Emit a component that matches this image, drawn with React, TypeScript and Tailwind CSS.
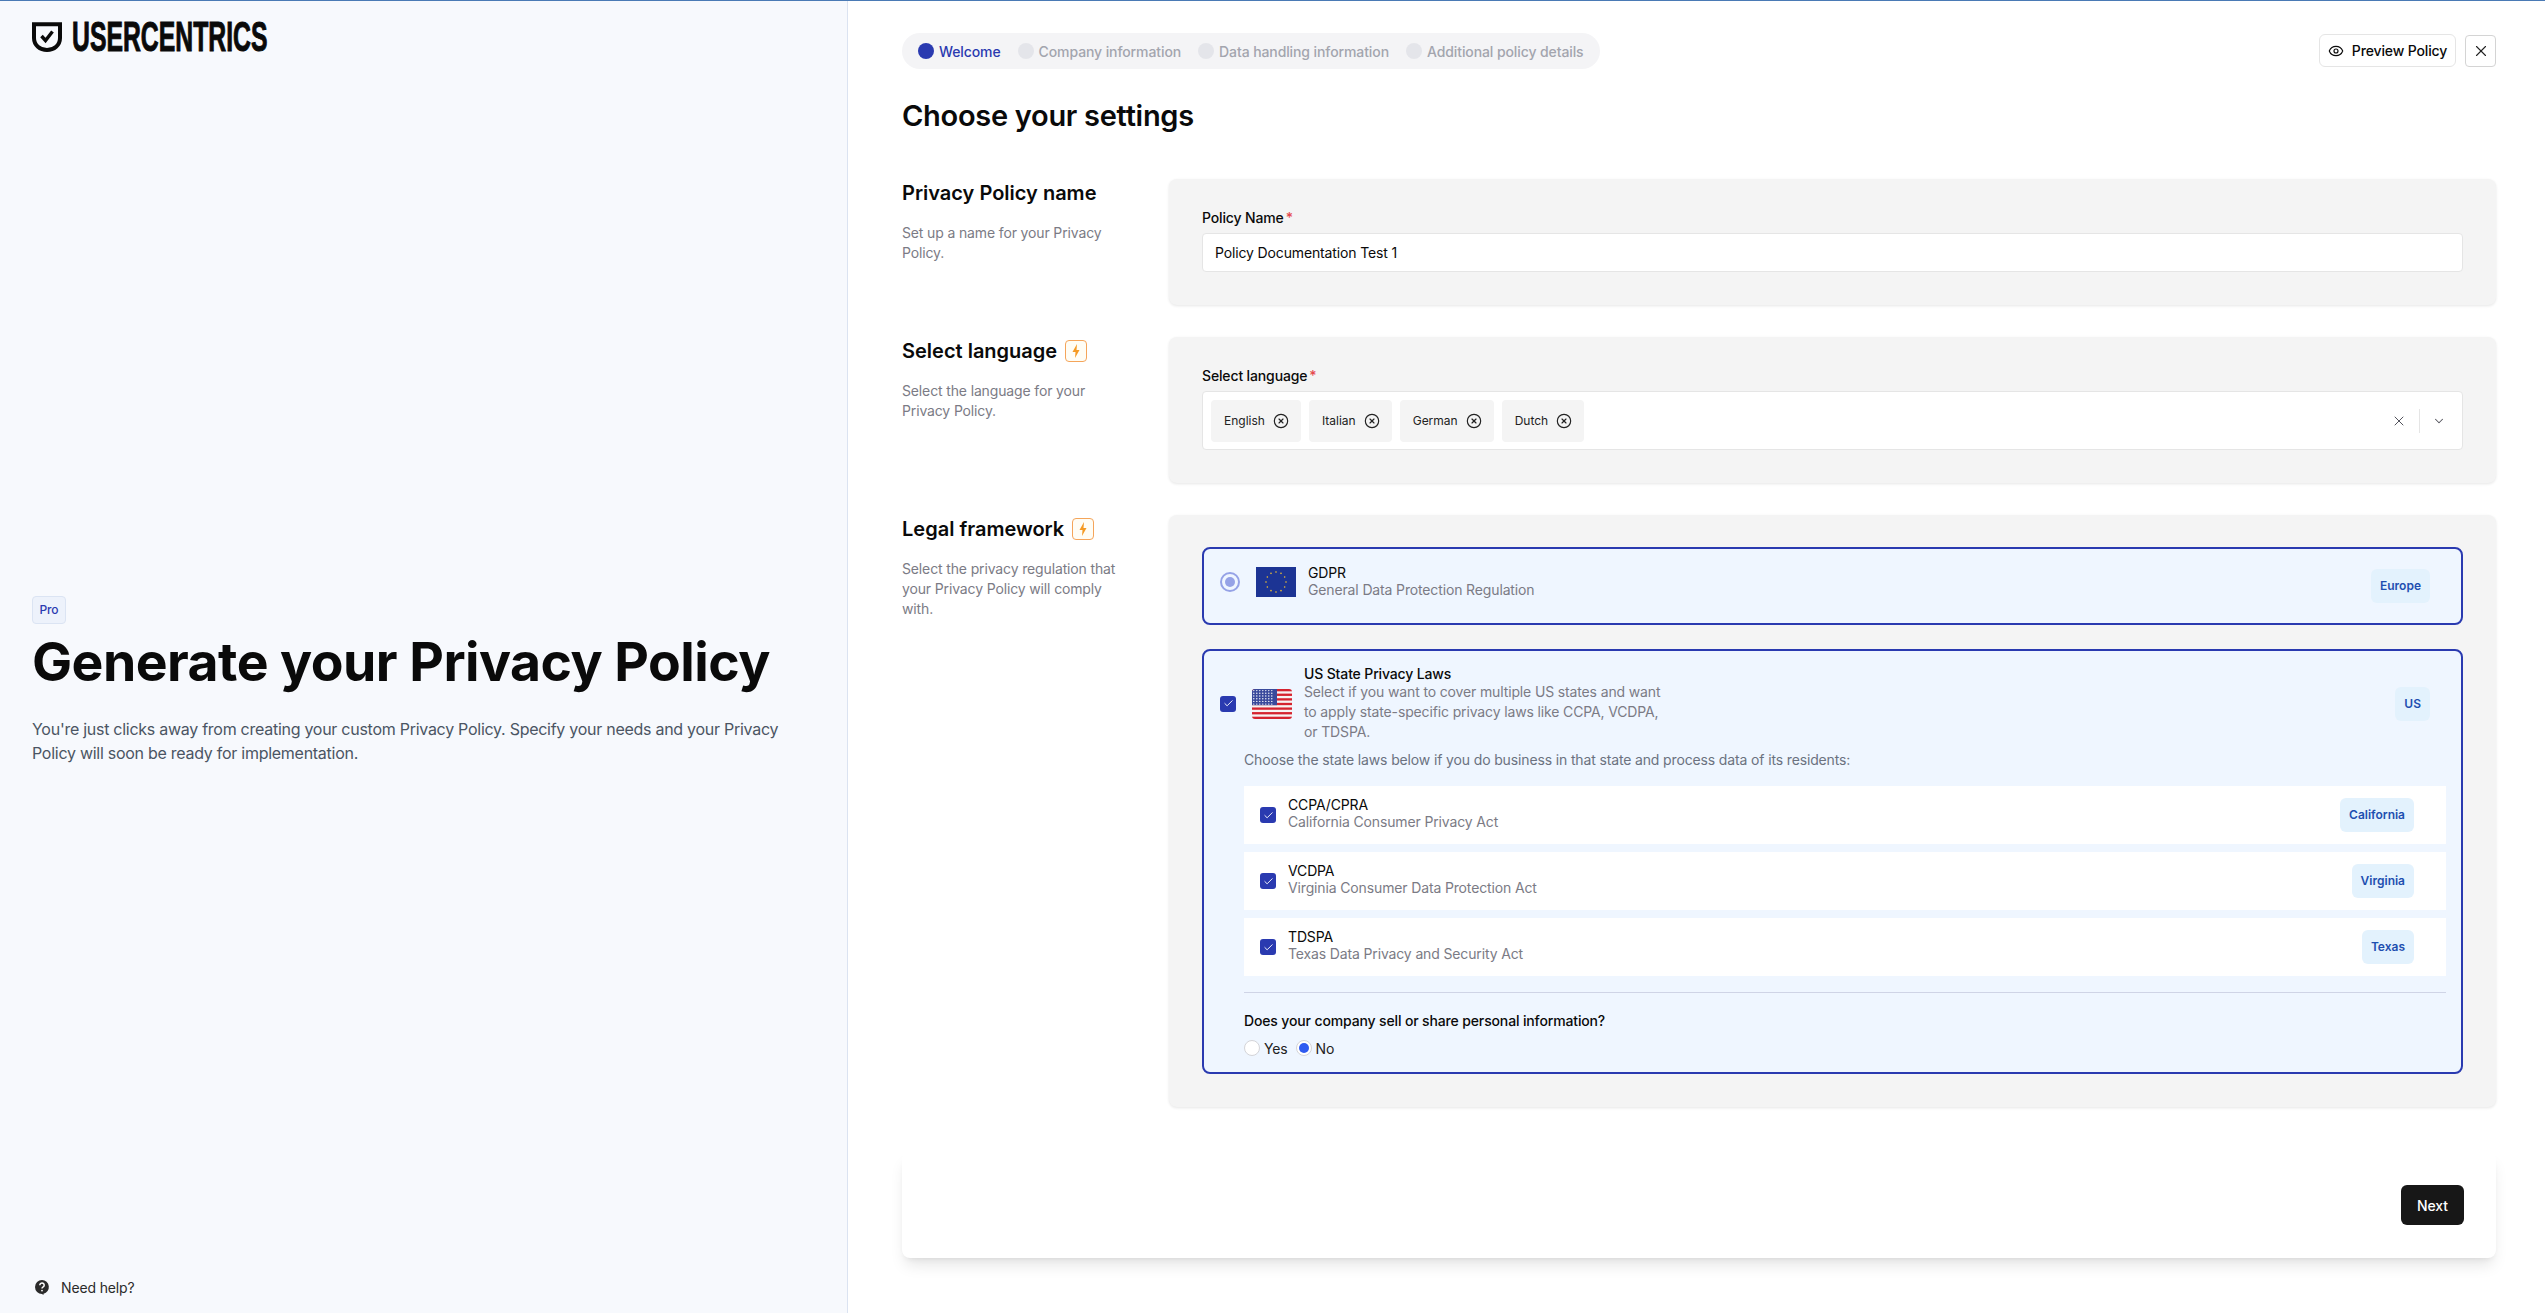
import { CircleX, Check, ChevronDown, Eye, X } from "lucide-react";

const Bolt = () => (
  <span className="ml-[8px] inline-flex h-[22px] w-[22px] items-center justify-center rounded-[4px] border border-[#f5a55a] bg-[#fffdf5]">
    <svg width="8" height="14" viewBox="0 0 8 14"><path d="M5 0 L0.5 8 H3.5 L3 14 L7.5 6 H4.5 Z" fill="#f59a23" /></svg>
  </span>
);

const Box = () => (
  <span className="flex h-[16px] w-[16px] shrink-0 items-center justify-center rounded-[3px] bg-[#2a3ab0]">
    <Check size={11} color="#ffffff" strokeWidth={2} />
  </span>
);

const Tag = ({ children }: { children: string }) => (
  <span className="flex h-[34px] shrink-0 items-center rounded-[6px] bg-[#e3f2fd] px-[9px] text-[12px] font-semibold tracking-normal text-[#1e4fb0]">{children}</span>
);

const EuFlag = () => {
  const stars = Array.from({ length: 12 }, (_, i) => {
    const a = (i * Math.PI) / 6;
    return <circle key={i} cx={20 + 10 * Math.cos(a)} cy={15 + 10 * Math.sin(a)} r="0.8" fill="#f2c230" />;
  });
  return (
    <svg width="40" height="30" viewBox="0 0 40 30" className="shrink-0">
      <rect width="40" height="30" fill="#1c3494" />
      {stars}
    </svg>
  );
};

const UsFlag = () => {
  const stripes = Array.from({ length: 7 }, (_, i) => <rect key={i} y={(i * 30 * 2) / 13} width="40" height={30 / 13} fill="#d5232f" />);
  const dots = [];
  for (let r = 0; r < 6; r++) for (let c = 0; c < 7; c++) dots.push(<circle key={r + "-" + c} cx={1.8 + c * 3} cy={1.6 + r * 2.7} r="0.7" fill="#ffffff" />);
  return (
    <svg width="40" height="30" viewBox="0 0 40 30" className="shrink-0 rounded-[3px]">
      <rect width="40" height="30" fill="#f6f3f3" />
      {stripes}
      <rect width="25" height="16.2" fill="#3a4a9c" />
      {dots}
    </svg>
  );
};

const Logo = () => (
  <div className="flex h-[32px] items-center gap-[10px]">
    <svg width="30" height="30" viewBox="0 0 30 30" className="shrink-0">
      <path d="M2 2.2 H28 V16 C28 23.2 22 28 15 28 C8 28 2 23.2 2 16 Z" fill="none" stroke="#0a0a0a" strokeWidth="4" />
      <path d="M9.5 14 L13.5 18.5 L20.5 9.5" fill="none" stroke="#0a0a0a" strokeWidth="3.4" />
    </svg>
    <div className="h-[32px] w-[195px]">
      <span className="inline-block origin-left scale-x-[0.59] whitespace-nowrap [font-family:'Liberation_Sans',sans-serif] text-[42px] font-bold leading-[32px] tracking-normal text-[#0a0a0a] [-webkit-text-stroke:1px_#0a0a0a]">USERCENTRICS</span>
    </div>
  </div>
);

const Help = () => (
  <svg width="16" height="16" viewBox="0 0 16 16" className="shrink-0">
    <path d="M8 1a7 7 0 1 0 0 14 l1.5 1 v-1.2 A7 7 0 0 0 8 1z" fill="#2b2b2b" />
    <path d="M5.8 6.2 a2.2 2.1 0 1 1 3.4 1.7 c-.8.5-1.2.9-1.2 1.7" fill="none" stroke="#fff" strokeWidth="1.5" />
    <circle cx="8" cy="11.6" r="0.9" fill="#fff" />
  </svg>
);

const Step = ({ label, on }: { label: string; on?: boolean }) => (
  <div className="flex items-center gap-[5px]">
    <span className={on ? "h-[16px] w-[16px] rounded-full bg-[#2a3ab0]" : "h-[16px] w-[16px] rounded-full bg-[#e4e5ea]"} />
    <span className={on ? "text-[14px] font-medium tracking-[-0.1px] text-[#2a3ab0]" : "text-[14px] font-medium tracking-[-0.1px] text-[#a3a5ae]"}>{label}</span>
  </div>
);

const Section = ({ title, desc, bolt, children }: { title: string; desc: string; bolt?: boolean; children: React.ReactNode }) => (
  <section className="grid grid-cols-[267px_1fr]">
    <div>
      <div className="mt-[3px] flex h-[22px] items-center text-[20px] font-semibold leading-[22px] tracking-normal text-[#0a0a0a]">
        {title}
        {bolt && <Bolt />}
      </div>
      <p className="mt-[19px] w-[225px] text-[14px] leading-[20px] text-[#7b7b85]">{desc}</p>
    </div>
    {children}
  </section>
);

const Chip = ({ label }: { label: string }) => (
  <span className="flex h-[42px] items-center gap-[8px] rounded-[4px] bg-[#f4f4f4] pl-[13px] pr-[12px] text-[12px] tracking-normal text-[#222222]">
    {label}
    <CircleX size={16} strokeWidth={1.75} color="#222222" />
  </span>
);

const Law = ({ name, full, tag }: { name: string; full: string; tag: string }) => (
  <div className="flex h-[58px] items-center bg-white pl-[16px] pr-[32px]">
    <Box />
    <div className="ml-[12px] flex-1 pb-[5px] text-[14px] leading-[17px]">
      <div className="text-[#0a0a0a]">{name}</div>
      <div className="text-[#7b7b85]">{full}</div>
    </div>
    <Tag>{tag}</Tag>
  </div>
);

export default function App() {
  return (
    <div className="flex h-screen w-full overflow-hidden border-t border-[#4a7ab5] bg-white [font-family:Inter,sans-serif] tracking-[-0.14px]">
      <aside className="flex w-[848px] shrink-0 flex-col border-r border-[#dbe3f1] bg-[#f7f9fd] pl-[32px]">
        <div className="mt-[20px]">
          <Logo />
        </div>
        <div className="mt-[543px]">
          <span className="inline-flex h-[28px] w-[34px] items-center justify-center rounded-[4px] border border-[#dbe4f3] bg-[#edf2fb] text-[12px] font-medium text-[#2a3ab0]">Pro</span>
          <h1 className="mt-[6px] text-[53.5px] font-bold leading-[64px] tracking-[-0.01em] text-[#0a0a0a]">Generate your Privacy Policy</h1>
          <p className="mt-[23px] w-[780px] text-[16px] leading-[24px] tracking-[-0.27px] text-[#4b5563]">You're just clicks away from creating your custom Privacy Policy. Specify your needs and your Privacy Policy will soon be ready for implementation.</p>
        </div>
        <div className="mt-auto mb-[16px] flex h-[20px] items-center gap-[11px] pl-[2px] text-[14px] text-[#2b2b2b]">
          <Help />
          Need help?
        </div>
      </aside>

      <main className="flex min-w-0 flex-1 flex-col pl-[54px] pr-[49px] pt-[32px]">
        <div className="flex items-start justify-between">
          <div className="flex h-[36px] items-center gap-[17px] rounded-full bg-[#f4f4f6] pl-[16px] pr-[16px]">
            <Step label="Welcome" on />
            <Step label="Company information" />
            <Step label="Data handling information" />
            <Step label="Additional policy details" />
          </div>
          <div className="mt-[1px] flex items-center gap-[9px]">
            <button className="flex h-[33px] w-[137px] items-center justify-center gap-[8px] rounded-[6px] border border-[#e5e5e5] bg-white text-[14px] font-medium text-[#0a0a0a]">
              <Eye size={16} strokeWidth={1.75} />
              Preview Policy
            </button>
            <button className="flex h-[32px] w-[31px] items-center justify-center rounded-[4px] border border-[#d4d4d4] bg-white">
              <X size={18} strokeWidth={1.5} color="#222222" />
            </button>
          </div>
        </div>

        <h2 className="mt-[29px] text-[29px] font-semibold leading-[36px] tracking-[-0.01em] text-[#0a0a0a]">Choose your settings</h2>

        <div className="mt-[45px] flex flex-col gap-[32px]">
          <Section title="Privacy Policy name" desc="Set up a name for your Privacy Policy.">
            <div className="rounded-[8px] bg-[#f4f4f4] px-[33px] pb-[33px] pt-[29px] shadow-[0_1px_3px_rgba(0,0,0,0.1)]">
              <div className="text-[14px] font-medium leading-[20px] text-[#0a0a0a]">
                Policy Name<span className="ml-[2px] text-[#e5484d]">*</span>
              </div>
              <div className="mt-[5px] flex h-[39px] items-center rounded-[4px] border border-[#e5e5e5] bg-white pl-[12px] text-[14px] text-[#0a0a0a]">Policy Documentation Test 1</div>
            </div>
          </Section>

          <Section title="Select language" desc="Select the language for your Privacy Policy." bolt>
            <div className="rounded-[8px] bg-[#f4f4f4] px-[33px] pb-[33px] pt-[29px] shadow-[0_1px_3px_rgba(0,0,0,0.1)]">
              <div className="text-[14px] font-medium leading-[20px] text-[#0a0a0a]">
                Select language<span className="ml-[2px] text-[#e5484d]">*</span>
              </div>
              <div className="mt-[5px] flex h-[59px] items-center gap-[8px] rounded-[4px] border border-[#e5e5e5] bg-white pl-[8px] pr-[16px]">
                <Chip label="English" />
                <Chip label="Italian" />
                <Chip label="German" />
                <Chip label="Dutch" />
                <div className="ml-auto flex items-center">
                  <X size={16} strokeWidth={1.5} color="#52525b" />
                  <span className="mx-[12px] h-[24px] w-px bg-[#e5e5e5]" />
                  <ChevronDown size={14} strokeWidth={1.75} color="#52525b" />
                </div>
              </div>
            </div>
          </Section>

          <Section title="Legal framework" desc="Select the privacy regulation that your Privacy Policy will comply with." bolt>
            <div className="flex flex-col gap-[24px] rounded-[8px] bg-[#f4f4f4] px-[33px] pb-[33px] pt-[32px] shadow-[0_1px_3px_rgba(0,0,0,0.1)]">
              <div className="flex h-[78px] items-center justify-between rounded-[8px] border-2 border-[#2a3ab0] bg-[#eff6ff] pl-[16px] pr-[31px]">
                <div className="flex items-center pb-[8px]">
                  <span className="flex h-[20px] w-[20px] items-center justify-center rounded-full border-2 border-[#95a2e6]">
                    <span className="h-[10px] w-[10px] rounded-full bg-[#95a2e6]" />
                  </span>
                  <span className="ml-[16px]"><EuFlag /></span>
                  <div className="ml-[12px] pb-[2px] text-[14px] leading-[17px]">
                    <div className="text-[#0a0a0a]">GDPR</div>
                    <div className="text-[#7b7b85]">General Data Protection Regulation</div>
                  </div>
                </div>
                <Tag>Europe</Tag>
              </div>

              <div className="rounded-[8px] border-2 border-[#2a3ab0] bg-[#eff6ff] pb-[13px] pl-[16px] pr-[15px] pt-[14px]">
                <div className="flex items-center pr-[16px]">
                  <Box />
                  <span className="ml-[16px]"><UsFlag /></span>
                  <div className="ml-[12px] w-[366px] text-[14px] leading-[20px] text-[#7b7b85]">
                    <div className="font-medium leading-[17px] text-[#0a0a0a]">US State Privacy Laws</div>
                    Select if you want to cover multiple US states and want to apply state-specific privacy laws like CCPA, VCDPA, or TDSPA.
                  </div>
                  <div className="ml-auto"><Tag>US</Tag></div>
                </div>
                <div className="ml-[24px]">
                  <p className="mt-[8px] text-[14px] leading-[20px] text-[#6b7280]">Choose the state laws below if you do business in that state and process data of its residents:</p>
                  <div className="mt-[16px] flex flex-col gap-[8px]">
                    <Law name="CCPA/CPRA" full="California Consumer Privacy Act" tag="California" />
                    <Law name="VCDPA" full="Virginia Consumer Data Protection Act" tag="Virginia" />
                    <Law name="TDSPA" full="Texas Data Privacy and Security Act" tag="Texas" />
                  </div>
                  <div className="mt-[16px] h-px bg-[#cfd4e6]" />
                  <div className="mt-[18px] text-[14px] font-medium leading-[20px] text-[#0a0a0a]">Does your company sell or share personal information?</div>
                  <div className="mt-[7px] mb-[1px] flex h-[20px] items-center text-[14px] text-[#222222]">
                    <span className="h-[16px] w-[16px] rounded-full border border-[#d4d4d8] bg-white" />
                    <span className="ml-[4px]">Yes</span>
                    <span className="ml-[8px] flex h-[16px] w-[16px] items-center justify-center rounded-full border border-[#d4d4d8] bg-white">
                      <span className="h-[10px] w-[10px] rounded-full bg-[#2f5bf0]" />
                    </span>
                    <span className="ml-[4px]">No</span>
                  </div>
                </div>
              </div>
            </div>
          </Section>
        </div>

        <div className="mt-[45px] flex h-[106px] items-center justify-end rounded-[8px] bg-white pr-[32px] shadow-[0_10px_15px_-3px_rgba(0,0,0,0.1),0_4px_6px_-4px_rgba(0,0,0,0.1)]">
          <button className="h-[40px] w-[63px] rounded-[6px] bg-[#171717] text-[14px] font-medium text-white">Next</button>
        </div>
      </main>
    </div>
  );
}
